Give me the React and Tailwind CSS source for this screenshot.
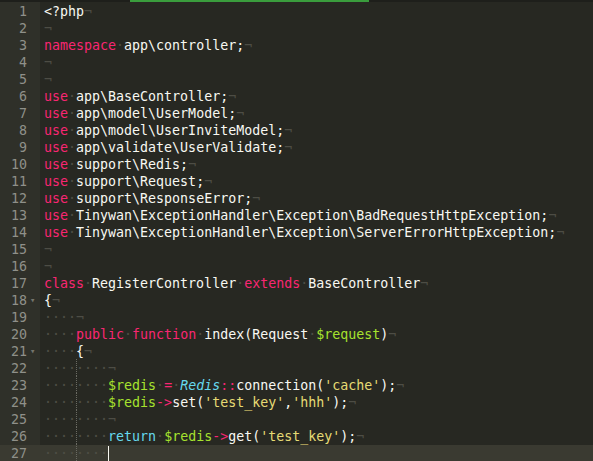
import React from "react";

// token shorthands: [type, text]
const K = (t) => ["kw", t];
const P = (t) => ["pl", t];
const V = (t) => ["var", t];
const C = (t) => ["cls", t];
const S = (t) => ["str", t];
const R = (t) => ["ret", t];
const W = (n = 1) => ["ws", n];
const I = (n) => ["ind", n];
const E = ["eol"];

const lines = [
  [P("<?php"), E],
  [E],
  [K("namespace"), W(), P("app\\controller;"), E],
  [E],
  [E],
  [K("use"), W(), P("app\\BaseController;"), E],
  [K("use"), W(), P("app\\model\\UserModel;"), E],
  [K("use"), W(), P("app\\model\\UserInviteModel;"), E],
  [K("use"), W(), P("app\\validate\\UserValidate;"), E],
  [K("use"), W(), P("support\\Redis;"), E],
  [K("use"), W(), P("support\\Request;"), E],
  [K("use"), W(), P("support\\ResponseError;"), E],
  [K("use"), W(), P("Tinywan\\ExceptionHandler\\Exception\\BadRequestHttpException;"), E],
  [K("use"), W(), P("Tinywan\\ExceptionHandler\\Exception\\ServerErrorHttpException;"), E],
  [E],
  [E],
  [K("class"), W(), P("RegisterController"), W(), K("extends"), W(), P("BaseController"), E],
  [P("{"), E],
  [I(4), E],
  [I(4), K("public"), W(), K("function"), W(), P("index(Request"), W(), V("$request"), P(")"), E],
  [I(4), P("{"), E],
  [I(8), E],
  [I(8), V("$redis"), W(), K("="), W(), C("Redis"), K("::"), P("connection("), S("'cache'"), P(");"), E],
  [I(8), V("$redis"), K("->"), P("set("), S("'test_key'"), P(","), S("'hhh'"), P(");"), E],
  [I(8), E],
  [I(8), R("return"), W(), V("$redis"), K("->"), P("get("), S("'test_key'"), P(");"), E],
  [I(8), ["cursor"]],
];

const folds = [18, 21];
const guides = {
  22: [4, 8],
  23: [4],
  24: [4],
  25: [4, 8],
  26: [4],
  27: [4, 8],
};

const Token = ({ tok, guideCols }) => {
  const [type, val] = tok;
  if (type === "eol") return <span className="text-[#4d4d45]">¬</span>;
  if (type === "cursor")
    return <span className="inline-block w-[1px] h-[16px] align-middle bg-[#f8f8f0]" />;
  if (type === "ws") return <span className="text-[#4d4d45]">{"·".repeat(val)}</span>;
  if (type === "ind") {
    const groups = [];
    for (let i = 0; i < val; i += 4) {
      const guided = guideCols.includes(i) && i > 0;
      groups.push(
        <span
          key={i}
          className={
            guided
              ? "relative text-[#4d4d45] before:absolute before:left-0 before:-top-[1px] before:h-[17px] before:border-l before:border-dotted before:border-[#6a6a62]"
              : "text-[#4d4d45]"
          }
        >
          {"····"}
        </span>
      );
    }
    return <>{groups}</>;
  }
  const cls = {
    kw: "text-[#f92672]",
    pl: "text-[#f8f8f2]",
    var: "text-[#a6e22e]",
    cls: "text-[#66d9ef] italic",
    str: "text-[#e6db74]",
    ret: "text-[#66d9ef]",
  }[type];
  return <span className={cls}>{val}</span>;
};

export default function App() {
  return (
    <div
      className="w-[593px] h-[461px] overflow-hidden bg-[#272822] flex flex-col"
      style={{ fontFamily: '"DejaVu Sans Mono", "Liberation Mono", monospace' }}
    >
      <div className="h-[2px] shrink-0 bg-[#1e1f1b] flex">
        <div className="w-[130px]" />
        <div className="w-[239px] bg-[#3a9d3d]" />
      </div>
      <div className="flex flex-col text-[13.3px] leading-[17px]">
        <div className="flex h-[1px]">
          <div className="w-[40px] bg-[#2f3029]" />
        </div>
        {lines.map((toks, idx) => {
          const n = idx + 1;
          const current = n === 27;
          return (
            <div key={n} className={`flex h-[17px] ${current ? "bg-[#3a3a31]" : ""}`}>
              <div
                className={`w-[40px] shrink-0 flex ${current ? "bg-[#3a3a31]" : "bg-[#2f3029]"}`}
              >
                <span className="w-[27px] text-right text-[#8f908a]">{n}</span>
                <span className="w-[13px] pl-[3px] text-[9px] text-[#75756d]">
                  {folds.includes(n) ? "▾" : ""}
                </span>
              </div>
              <div className="pl-[4px] whitespace-pre flex items-center">
                {toks.map((t, i) => (
                  <Token key={i} tok={t} guideCols={guides[n] || []} />
                ))}
              </div>
            </div>
          );
        })}
      </div>
    </div>
  );
}
